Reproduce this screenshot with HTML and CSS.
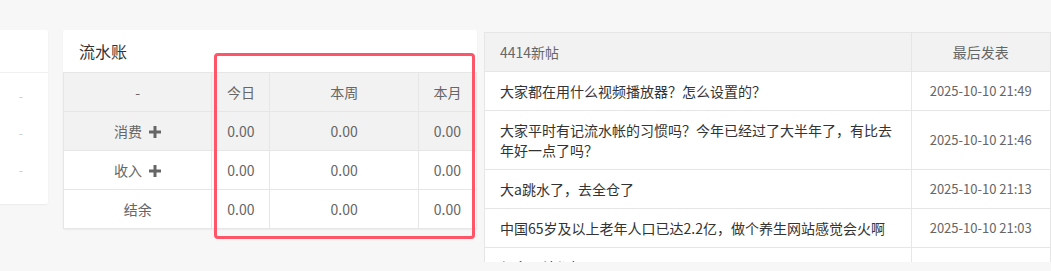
FILE: index.html
```html
<!DOCTYPE html>
<html lang="zh-CN">
<head>
    <meta charset="UTF-8">
    <meta name="viewport" content="width=device-width, initial-scale=1.0">
    <title>流水账</title>
    <link rel="stylesheet" href="styles.css">
</head>
<body>
    <div class="page">
        <!-- 左侧被裁掉的卡片 -->
        <div class="card side">
            <div class="side-head"></div>
            <div class="side-body">
                <div class="side-row">-</div>
                <div class="side-row">-</div>
                <div class="side-row">-</div>
            </div>
        </div>

        <!-- 流水账 -->
        <div class="card ledger">
            <div class="card-title">流水账</div>
            <table class="ledger-table">
                <colgroup>
                    <col class="c-name">
                    <col class="c-small">
                    <col class="c-name">
                    <col class="c-small">
                </colgroup>
                <thead>
                    <tr>
                        <th>-</th>
                        <th>今日</th>
                        <th>本周</th>
                        <th>本月</th>
                    </tr>
                </thead>
                <tbody>
                    <tr class="hover">
                        <td>消费 <span class="plus"><svg viewBox="0 0 12 12" width="12" height="12"><rect x="4.5" y="0" width="3" height="12"/><rect x="0" y="4.5" width="12" height="3"/></svg></span></td>
                        <td>0.00</td>
                        <td>0.00</td>
                        <td>0.00</td>
                    </tr>
                    <tr>
                        <td>收入 <span class="plus"><svg viewBox="0 0 12 12" width="12" height="12"><rect x="4.5" y="0" width="3" height="12"/><rect x="0" y="4.5" width="12" height="3"/></svg></span></td>
                        <td>0.00</td>
                        <td>0.00</td>
                        <td>0.00</td>
                    </tr>
                    <tr>
                        <td>结余</td>
                        <td>0.00</td>
                        <td>0.00</td>
                        <td>0.00</td>
                    </tr>
                </tbody>
            </table>
            <!-- 红色标注框 -->
            <div class="highlight"></div>
        </div>

        <!-- 新帖 -->
        <div class="card posts">
            <table class="posts-table">
                <colgroup>
                    <col class="c-title">
                    <col class="c-date">
                </colgroup>
                <thead>
                    <tr>
                        <th class="t-left">4414新帖</th>
                        <th>最后发表</th>
                    </tr>
                </thead>
                <tbody>
                    <tr>
                        <td class="t-left">大家都在用什么视频播放器？怎么设置的？</td>
                        <td class="date">2025-10-10 21:49</td>
                    </tr>
                    <tr>
                        <td class="t-left">大家平时有记流水帐的习惯吗？今年已经过了大半年了，有比去年好一点了吗？</td>
                        <td class="date">2025-10-10 21:46</td>
                    </tr>
                    <tr>
                        <td class="t-left">大a跳水了，去全仓了</td>
                        <td class="date">2025-10-10 21:13</td>
                    </tr>
                    <tr>
                        <td class="t-left">中国65岁及以上老年人口已达2.2亿，做个养生网站感觉会火啊</td>
                        <td class="date">2025-10-10 21:03</td>
                    </tr>
                    <tr>
                        <td class="t-left">很多网站都打不开了</td>
                        <td class="date">2025-10-10 20:58</td>
                    </tr>
                </tbody>
            </table>
        </div>
    </div>
</body>
</html>
```

FILE: styles.css
```css
html, body {
    margin: 0;
    padding: 0;
}

body {
    font-family: "Noto Sans CJK SC", "Noto Sans", sans-serif;
    font-size: 14px;
    color: #333;
    background-color: #f7f7f7;
    height: 271px;
    overflow: hidden;
}

.page {
    display: flex;
    align-items: flex-start;
    padding-top: 30px;
}

.card {
    background-color: #fff;
    box-shadow: 0 1px 2px rgba(0, 0, 0, 0.05);
}

/* 左侧卡片 */
.side {
    width: 48px;
    margin-right: 15px;
    border-radius: 0 2px 2px 0;
}

.side-head {
    height: 42px;
    border-bottom: 1px solid #f0f0f0;
}

.side-body {
    padding: 4px 0 16px;
}

.side-row {
    height: 37px;
    line-height: 37px;
    padding-right: 25px;
    text-align: right;
    color: #c8c8c8;
    font-size: 12px;
}

/* 流水账 */
.ledger {
    position: relative;
    width: 414px;
    margin-right: 7px;
    border-radius: 2px;
}

.card-title {
    height: 42px;
    line-height: 42px;
    padding-left: 16px;
    font-size: 16px;
    color: #333;
}

.ledger-table {
    width: 100%;
    border-collapse: collapse;
    table-layout: fixed;
    color: #666;
}

.ledger-table .c-name {
    width: 148px;
}

.ledger-table .c-small {
    width: 58px;
}

.ledger-table th,
.ledger-table td {
    height: 38px;
    padding: 0;
    border: 1px solid #e6e6e6;
    text-align: center;
    font-weight: normal;
    line-height: 20px;
}

.ledger-table thead tr,
.ledger-table tr.hover {
    background-color: #f2f2f2;
}

.plus {
    display: inline-block;
    margin-left: 4px;
    vertical-align: -1px;
}

.plus svg {
    display: block;
    fill: #666;
}

.highlight {
    position: absolute;
    left: 151px;
    top: 23px;
    width: 261px;
    height: 186px;
    box-sizing: border-box;
    border: 3px solid #ff5568;
    border-radius: 4px;
}

/* 新帖 */
.posts {
    margin-top: 2px;
    width: 567px;
    height: 230px;
    overflow: hidden;
    box-sizing: border-box;
    border: 1px solid #e6e6e6;
    border-bottom: none;
    box-shadow: none;
}

.posts-table {
    width: 100%;
    border-collapse: collapse;
    table-layout: fixed;
}

.posts-table .c-date {
    width: 139px;
}

.posts-table th,
.posts-table td {
    padding: 9px 15px;
    border-bottom: 1px solid #e6e6e6;
    line-height: 20px;
    text-align: center;
    font-weight: normal;
}

.posts-table th {
    background-color: #f2f2f2;
    color: #666;
}

.posts-table th + th,
.posts-table td + td {
    border-left: 1px solid #e6e6e6;
}

.posts-table .t-left {
    text-align: left;
}

.posts-table .date {
    color: #666;
    font-size: 13px;
}
```
